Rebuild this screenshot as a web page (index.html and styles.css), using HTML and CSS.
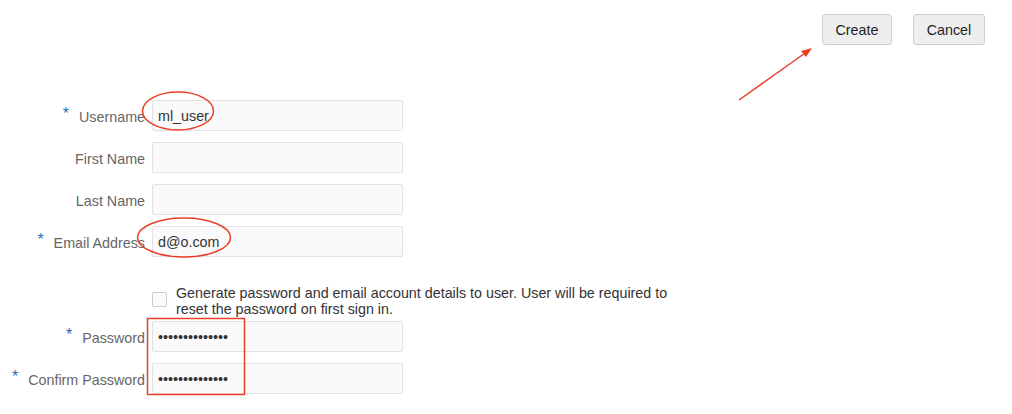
FILE: index.html
```html
<!DOCTYPE html>
<html>
<head>
<meta charset="utf-8">
<link rel="stylesheet" href="styles.css">
</head>
<body>
<div class="page">
  <div class="toolbar">
    <button class="btn btn-create">Create</button>
    <button class="btn btn-cancel">Cancel</button>
  </div>
  <form class="form">
    <div class="row">
      <label class="label"><span class="req">*</span>Username</label>
      <input class="field" type="text" value="ml_user">
    </div>
    <div class="row">
      <label class="label">First Name</label>
      <input class="field" type="text" value="">
    </div>
    <div class="row">
      <label class="label">Last Name</label>
      <input class="field" type="text" value="">
    </div>
    <div class="row">
      <label class="label"><span class="req">*</span>Email Address</label>
      <input class="field" type="text" value="d@o.com">
    </div>
    <div class="row check-row">
      <span class="label"></span>
      <div class="check">
        <span class="box"></span>
        <span class="check-text">Generate password and email account details to user. User will be required to reset the password on first sign in.</span>
      </div>
    </div>
    <div class="row">
      <label class="label"><span class="req">*</span>Password</label>
      <input class="field" type="password" value="abcdefghijklmn">
    </div>
    <div class="row">
      <label class="label"><span class="req">*</span>Confirm Password</label>
      <input class="field" type="password" value="abcdefghijklmn">
    </div>
  </form>
  <svg class="marks" width="1012" height="414" viewBox="0 0 1012 414">
    <ellipse cx="178" cy="111" rx="35.5" ry="19" fill="none" stroke="#ea3f26" stroke-width="1.5"/>
    <ellipse cx="184" cy="237.5" rx="46.5" ry="19.5" fill="none" stroke="#ea3f26" stroke-width="1.5"/>
    <rect x="147.5" y="318.5" width="97" height="76" fill="none" stroke="#ea3f26" stroke-width="1.5"/>
    <line x1="739" y1="100" x2="808" y2="51" stroke="#ea3f26" stroke-width="1.5"/>
    <polygon points="812,48 801,51 806,57" fill="#ea3f26"/>
  </svg>
</div>
</body>
</html>
```
FILE: styles.css
```css
html, body {
  margin: 0;
  padding: 0;
  background: #ffffff;
}
body {
  font-family: "Liberation Sans", Arial, sans-serif;
  font-size: 14.3px;
}
.page {
  position: relative;
  width: 1012px;
  height: 414px;
  overflow: hidden;
}
.toolbar {
  display: flex;
  justify-content: flex-end;
  gap: 21px;
  padding: 14px 27px 0 0;
  height: 31px;
}
.btn {
  height: 31px;
  padding: 2px 0 0;
  border: 1px solid #cfcfcf;
  border-radius: 3px;
  background: #eeeeee;
  color: #1f1f1f;
  font-family: "Liberation Sans", Arial, sans-serif;
  font-size: 14.3px;
  line-height: 27px;
  text-align: center;
}
.btn-create {
  width: 70px;
}
.btn-cancel {
  width: 72px;
}
.form {
  display: flex;
  flex-direction: column;
  margin-top: 55px;
}
.row {
  display: flex;
  align-items: center;
  height: 31px;
  margin-bottom: 11px;
}
.label {
  width: 145px;
  flex: none;
  margin-right: 7px;
  text-align: right;
  color: #666666;
  font-size: 14.3px;
  line-height: 16px;
  padding-top: 2px;
  white-space: nowrap;
}
.req {
  color: #1f6fb5;
  font-size: 16px;
  position: relative;
  top: -3px;
  margin-right: 10px;
}
.field {
  width: 251px;
  height: 31px;
  box-sizing: border-box;
  border: 1px solid #e2e2e2;
  border-radius: 2px;
  background: #fafafa;
  padding: 0 5px;
  color: #333333;
  font-family: "Liberation Sans", Arial, sans-serif;
  font-size: 14.3px;
  outline: none;
}
.check-row {
  height: auto;
  align-items: flex-start;
  margin-top: 17px;
  margin-bottom: 4px;
}
.check {
  display: flex;
  align-items: flex-start;
  gap: 9px;
}
.box {
  flex: none;
  width: 15px;
  height: 15px;
  box-sizing: border-box;
  border: 1px solid #cccccc;
  border-radius: 2px;
  background: #fbfbfb;
  margin-top: 7px;
}
.check-text {
  width: 500px;
  color: #333333;
  font-size: 14.3px;
  line-height: 16px;
}
.marks {
  position: absolute;
  left: 0;
  top: 0;
  pointer-events: none;
}
```
